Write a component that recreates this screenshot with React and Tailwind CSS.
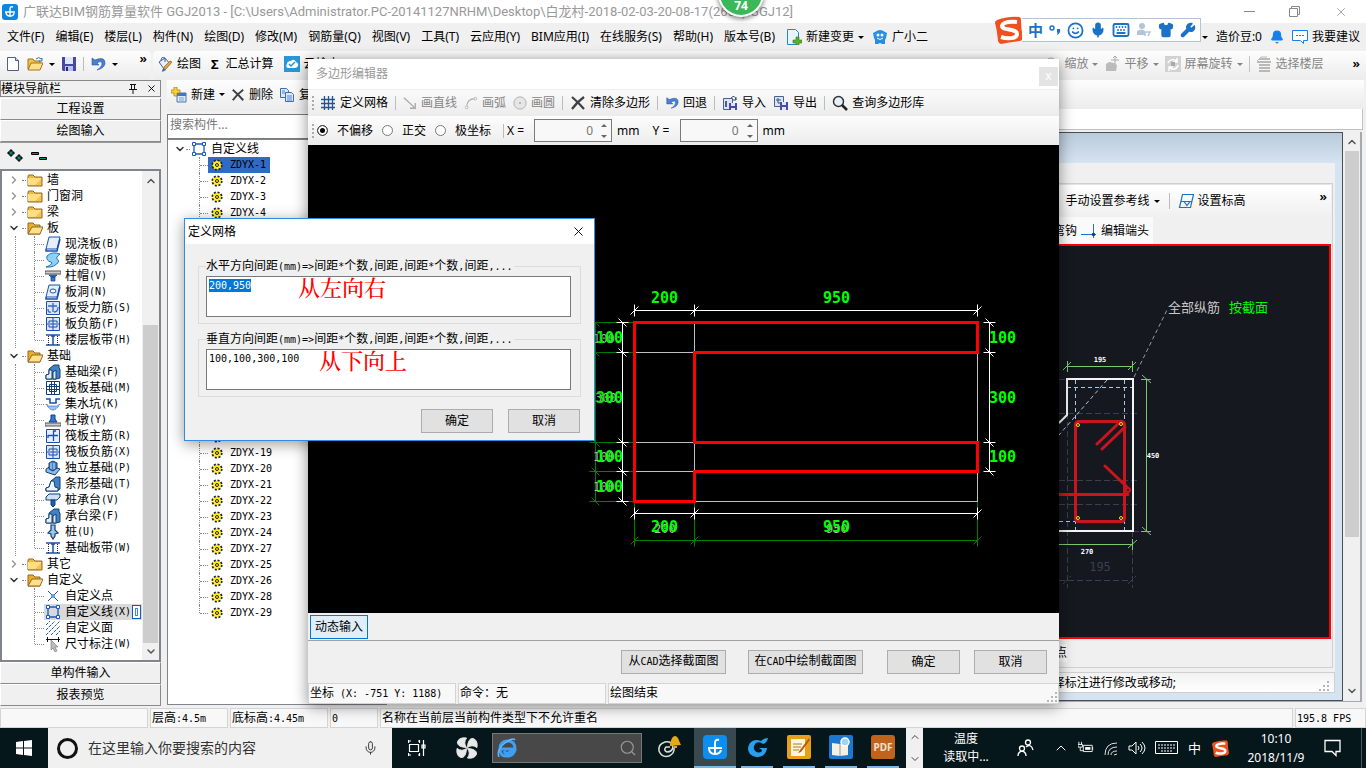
import React, { useEffect, useRef, useState } from 'react';
import { ChevronDown, ChevronRight, ChevronUp, X, Search, Bell, Mic, Smile, Keyboard, Wrench, Shirt } from 'lucide-react';

// Small 16x16 drawings, keyed by name
const ICONS = {
  page: <><path d="M2.500 1.500h8l3 3v10h-11z" fill="#fff" stroke="#4a6285" /><path d="M10.500 1.500v3h3" fill="#c9d8ec" stroke="#4a6285" /></>,
  open: <><path d="M1 13V3h5l1 2h6v8z" fill="#f3c44a" stroke="#a27420" /><path d="M1 14l3-7h12l-3 7z" fill="#ffe08a" stroke="#a27420" /><path d="M9 3q3-3 5 0l1-1v3h-3" fill="none" stroke="#3b6fb5" /></>,
  save: <><path d="M1 1h14v14H2l-1-1z" fill="#4747a8" /><path d="M4 1h8v7H4z" fill="#dfe5fa" /><path d="M4 10h8v5H4z" fill="#b9c2e6" /><path d="M5 11h2v4H5z" fill="#222a6a" /></>,
  undo: <path d="M2 2v7h7L7 7q5-3 5 1 0 3-5 6 8-2 8-7 0-7-10-3z" fill="#4c7fd0" stroke="#2a56a3" strokeWidth=".6" />,
  bucket: <><path d="M2 6l6-4 5 6-6 5z" fill="#e8eefa" stroke="#42618f" /><path d="M4 5q0-5 4-3v4" fill="none" stroke="#42618f" /><path d="M15 6l-6 7-3 2 1-4 6-6z" fill="#e9a53c" stroke="#8a5a17" strokeWidth=".7" /><path d="M6 12l3 2-4 2z" fill="#2a6cc4" /></>,
  cloud: <><rect width="16" height="16" fill="#2a95d8" /><path d="M4 12q-3-1-1-4 0-3 4-3 3-3 5 1 3 1 2 4-1 2-3 2z" fill="#fff" /><path d="M5 8l2 2 4-4" fill="none" stroke="#2a95d8" strokeWidth="1.500" /></>,
  addnew: <><path d="M6 6h9v9H6z" fill="#dce8fa" stroke="#4a76b8" /><path d="M6 6h9v3H6z" fill="#4a76b8" /><path d="M8 11h5M8 13h5" stroke="#7fa2d5" /><path d="M3 0h3v3h3v3H6v3H3V6H0V3h3z" fill="#f6d33a" stroke="#a5780f" strokeWidth=".7" /></>,
  del: <path d="M2 2q6 5 12 12M14 2Q7 7 2 14" stroke="#3d4045" strokeWidth="2.200" fill="none" />,
  copy: <><path d="M1.500 1.500h6l2 2v7h-8z" fill="#dbe8fa" stroke="#3f6db0" /><path d="M6.500 5.500h6l2 2v7h-8z" fill="#dbe8fa" stroke="#3f6db0" /><path d="M8 9h5M8 11h5M8 13h5M3 4h3M3 6h3" stroke="#5b86c4" /></>,
  change: <><path d="M1.500.5h8l3 3v12h-11z" fill="#e8f4ff" stroke="#2a85c5" /><path d="M10 8h3v3h3v3h-3v2h-3v-2H7v-3h3z" fill="#5fae2c" stroke="#2f7d10" strokeWidth=".6" /></>,
  mascot: <><path d="M3 3q5-4 10 0l2 1-1 5-1 2v4h-3l-2-1-2 1H3v-4L2 9 1 4z" fill="#2a8ee0" /><circle cx="6" cy="6" r="1.500" fill="#fff" /><circle cx="10" cy="6" r="1.500" fill="#fff" /><path d="M5 9q3 3 6 0" stroke="#fff" fill="none" /></>,
  grid: <path d="M1 4.500h14M1 8.500h14M1 12.500h14M4.500 1v14M8.500 1v14M12.500 1v14" stroke="#24509c" strokeWidth="1.300" fill="none" />,
  line: <path d="M1 2l12 11M14 8v6H8" stroke="#aaa" strokeWidth="1.500" fill="none" />,
  arc: <><path d="M3 13Q3 3 13 3" stroke="#aaa" fill="none" strokeWidth="1.300" /><circle cx="3" cy="13" r="1.500" fill="#fff" stroke="#aaa" /><circle cx="13" cy="3" r="1.500" fill="#fff" stroke="#aaa" /></>,
  circle: <><circle cx="8" cy="8" r="7" stroke="#aaa" fill="#e6e6e6" /><circle cx="8" cy="8" r="1" fill="#999" /></>,
  import: <><path d="M1.500 3.500h9v11h-9z" fill="#dbe4f5" stroke="#46618f" /><path d="M3 6h2v6H3z" fill="#46618f" /><path d="M7 8h8v7H7z" fill="#4a4aa8" /><path d="M9 8h4v3H9zM9 13h4v2H9z" fill="#dfe5fa" /><path d="M9 3q4-4 5 2M14 2v3h-3" stroke="#33507f" fill="none" /></>,
  export: <><path d="M1.500 1.500h9v10h-9z" fill="#dbe4f5" stroke="#46618f" /><path d="M3 5h5M5 3v5h4" stroke="#33507f" fill="none" /><path d="M7 7h8v8H7z" fill="#4a4aa8" /><path d="M9 7h4v3H9zM9 12h4v3H9z" fill="#dfe5fa" /></>,
  find: <><circle cx="6.500" cy="6.500" r="5" fill="#e3f1fb" stroke="#333" strokeWidth="1.500" /><path d="M10 10l5 5" stroke="#222" strokeWidth="2.500" /></>,
  hand: <><path d="M2 15V8l3-2 5 1 3 2-1 6z" fill="#bbb" /><path d="M11 0v8M7 4h8M11 0L9 2M11 0l2 2" stroke="#aaa" fill="none" /></>,
  rotate: <><rect width="16" height="16" fill="#d2d2d2" /><path d="M3 7a5 5 0 0 1 9-1M12 2v4H8M13 9a5 5 0 0 1-9 2M4 15v-4h4" stroke="#fff" strokeWidth="1.500" fill="none" /><path d="M6 6h4v4H6z" fill="#aaa" /></>,
  floors: <><path d="M3 3h11M1 6h14M3 9h11M3 12h11M3 15h11" stroke="#a5a5a5" strokeWidth="1.500" /><path d="M1 5l4-4h6" stroke="#bbb" fill="none" /></>,
  zoom: <circle cx="7" cy="7" r="5" fill="none" stroke="#aaa" />,
  level: <path d="M4.500 1.500h11l-3 13h-11zM3 8.500h11M6 8.500l3 4 3-4z" fill="none" stroke="#1974c4" strokeWidth="1.200" />,
  tip: <><path d="M0 11.500h15M12.500 1v14" stroke="#2a6cd0" /><circle cx="12.500" cy="11.500" r="1.800" fill="#123f95" /></>,
  // tree
  folder: <><path d="M1 14V4q0-1 1-1h4l2 2h7v9z" fill="#f0b93c" stroke="#8c6a25" /><path d="M1 13V6h13v7z" fill="#ffdf86" /><path d="M8 13l6-6v6z" fill="#f3c250" /></>,
  folderOpen: <><path d="M1 14V3h5l2 2h5v9z" fill="#e9ab2e" stroke="#8c6a25" /><path d="M1 14l4-7h11l-3 7z" fill="#ffe08a" stroke="#8c6a25" /></>,
  slab: <><path d="M4 1h11l-3 12H1z" fill="#e6efff" stroke="#1b4fae" /><path d="M1 13v2h11l3-12" fill="none" stroke="#1b4fae" strokeWidth="1.500" /></>,
  spiral: <path d="M2 4q5-5 13-2Q9 6 14 9q-4 7-13 6 8-3 5-5-5-1-4-6z" fill="#8fd0f5" stroke="#1f74b8" />,
  cap: <><path d="M0 3h16v3H0z" fill="#ccc" stroke="#555" /><path d="M4 7h8l-2 2H6zM6 9h4v4H6z" fill="#3a78cc" stroke="#123f85" strokeWidth=".7" /></>,
  hole: <><path d="M4 1h11l-3 12H1z" fill="#e6efff" stroke="#1b4fae" /><path d="M1 13v2h11l3-12" fill="none" stroke="#1b4fae" strokeWidth="1.500" /><ellipse cx="8" cy="7" rx="3" ry="2" fill="#fff" stroke="#1b4fae" /></>,
  rebar: <><path d="M1.500 1.500h13v13h-13z" fill="#dbe6fb" stroke="#1b4fae" /><path d="M3 6h9M8 3v9M3 9q0 4 3 3M13 7q0 5-4 5" stroke="#3568bd" strokeWidth="1.300" fill="none" /></>,
  negbar: <><path d="M1.500 1.500h13v13h-13z" fill="#dbe6fb" stroke="#1b4fae" /><path d="M8 2v12M2 8h12M4 5h8M4 11h8M4 5v2M12 5v2M4 11V9M12 11V9" stroke="#1b4fae" fill="none" /></>,
  strip: <><path d="M1 3h14M1 13h14" stroke="#1b4fae" strokeWidth="1.500" /><path d="M8 4v9M6 4h4" stroke="#1b4fae" strokeWidth="1.500" /><path d="M3.500 4v9M12.500 4v9" stroke="#222" strokeDasharray="1 1" /></>,
  beam: <><path d="M1 15v-4l3-1V5l5-4h5v3l1 1v9l-4 1z" fill="#3f83c4" stroke="#123f75" /><path d="M1 15v-4l3-1V6h3v9zM8 8l3-2v9H8z" fill="#e3eefc" stroke="#123f75" /></>,
  raft: <><path d="M1.500 1.500h13v13h-13z" fill="#fff" stroke="#123f75" /><path d="M4.500 4.500h7v7h-7zM6.500 1v14M9.500 1v14M1 6.500h14M1 9.500h14" fill="none" stroke="#123f75" /></>,
  pit: <><path d="M1 3h4v4h6V3h4" fill="none" stroke="#1b4fae" strokeWidth="1.500" /><path d="M1 8q7 12 14 0l-3 2H4z" fill="#9cc6ec" stroke="#1b4fae" strokeDasharray="1 1" /></>,
  pier: <><path d="M0 11h16v3H0z" fill="#ccc" stroke="#555" /><path d="M6 3h4v4l2 3H4l2-3z" fill="#3a78cc" stroke="#123f85" /></>,
  mainbar: <><path d="M1.500 1.500h13v13h-13z" fill="#e6efff" stroke="#1b4fae" /><path d="M8.500 3v10M3 7.500h10M3 7v3M8 3h3" stroke="#1b4fae" strokeWidth="1.300" fill="none" /></>,
  isolated: <><path d="M1 9l5-3 9 3-5 6-9-3z" fill="#8fb9e6" stroke="#123f75" /><path d="M4 9V3l4-2 4 2v5l-4 3z" fill="#3f83c4" stroke="#123f75" /><path d="M6 3v6M9 3v6" stroke="#cfe1f7" /></>,
  stripbase: <><path d="M1 15v-3l3-1 2-6 5-4h4v12l-3 2z" fill="#3f83c4" stroke="#123f75" /><path d="M1 15v-3l3-1 2-6h3l1 6 3 1v3z" fill="#eef5ff" stroke="#123f75" /></>,
  pilecap: <><path d="M1 5l3-3h11v3l-3 3H1z" fill="#cfe1f7" stroke="#123f75" /><path d="M6 8h4v5l-2 2-2-2z" fill="#1f5fa8" stroke="#123f75" /></>,
  pile: <path d="M6 1h4v5l3 3-3 1v2l-2 3-2-3v-2L3 9l3-3z" fill="#9cc6ec" stroke="#123f75" strokeWidth="1.200" />,
  point: <><path d="M3 3l10 10M13 3L3 13" stroke="#1b4fae" /><circle cx="8" cy="8" r="2" fill="#58a0e8" /></>,
  poly: <><path d="M3 3h10v10H3z" fill="none" stroke="#1b57c0" strokeWidth="1.300" /><path d="M1.500 1.500h3v3h-3zM11.500 1.500h3v3h-3zM1.500 11.500h3v3h-3zM11.500 11.500h3v3h-3z" fill="#fff" stroke="#1b57c0" /></>,
  hatch: <path d="M1 5l4-4M1 10l9-9M1 15L15 1M6 15l9-9M11 15l4-4" stroke="#2457b5" strokeDasharray="3 1" />,
  dim: <><path d="M1 3.500h14M2.500 1v5M13.500 1v5" stroke="#111" fill="none" /><path d="M6 4v10l2-2 2 4 2-1-2-4h3z" fill="#bbb" stroke="#777" strokeWidth=".6" /></>,
  gear: <><circle cx="8" cy="8" r="4.600" fill="#ffef28" stroke="#222" strokeWidth="2" strokeDasharray="2 1.600" /><circle cx="8" cy="8" r="3.800" fill="#ffef28" /><circle cx="8" cy="8" r="1.500" fill="none" stroke="#222" /></>,
};

const Icon = ({ name, className = 'w-4 h-4' }) => (
  <svg viewBox="0 0 16 16" className={`shrink-0 ${className}`} aria-hidden="true">{ICONS[name]}</svg>
);

// Latin runs are set in a half-width mono face, like the bitmap system font
const Sim = ({ children }) =>
  children.split(/([\x20-\x7e]+)/).filter(Boolean).map((part, i) =>
    /^[\x20-\x7e]/.test(part)
      ? <span key={i} className="font-['DejaVu_Sans_Mono',monospace] text-[10px] whitespace-pre">{part}</span>
      : part
  );

const Caret = ({ className = '' }) => (
  <span className={`inline-block border-x-[3px] border-t-[3px] border-x-transparent border-t-current ${className}`} />
);

const Sep = () => <span className="w-px h-[14px] bg-[#bdbdbd] shrink-0" />;

const Tool = ({ icon, label, caret, disabled, iconClass }) => (
  <button className={`flex items-center gap-1 shrink-0 whitespace-nowrap ${disabled ? 'text-[#858585]' : 'text-black'}`}>
    {icon && <Icon name={icon} className={iconClass} />}
    {label}
    {caret && <Caret />}
  </button>
);

const MENUS = ['文件(F)', '编辑(E)', '楼层(L)', '构件(N)', '绘图(D)', '修改(M)', '钢筋量(Q)', '视图(V)', '工具(T)', '云应用(Y)', 'BIM应用(I)', '在线服务(S)', '帮助(H)', '版本号(B)'];

const NAV = [
  { label: '墙' },
  { label: '门窗洞' },
  { label: '梁' },
  {
    label: '板',
    items: [['slab', '现浇板(B)'], ['spiral', '螺旋板(B)'], ['cap', '柱帽(V)'], ['hole', '板洞(N)'], ['rebar', '板受力筋(S)'], ['negbar', '板负筋(F)'], ['strip', '楼层板带(H)']],
  },
  {
    label: '基础',
    items: [['beam', '基础梁(F)'], ['raft', '筏板基础(M)'], ['pit', '集水坑(K)'], ['pier', '柱墩(Y)'], ['mainbar', '筏板主筋(R)'], ['negbar', '筏板负筋(X)'], ['isolated', '独立基础(P)'], ['stripbase', '条形基础(T)'], ['pilecap', '桩承台(V)'], ['beam', '承台梁(F)'], ['pile', '桩(U)'], ['strip', '基础板带(W)']],
  },
  { label: '其它' },
  {
    label: '自定义',
    last: true,
    items: [['point', '自定义点'], ['poly', '自定义线(X)'], ['hatch', '自定义面'], ['dim', '尺寸标注(W)']],
  },
];

const COMPONENT_IDS = [1, 2, 3, 4, 5, 6, 7, 8, 9, 10, 11, 12, 13, 14, 15, 16, 17, 18, 19, 20, 21, 22, 23, 24, 27, 25, 26, 28, 29];

const TitleBar = () => (
  <header className="flex items-center h-[23px] bg-white pl-[2px] text-[#999] text-[12px]">
    <svg viewBox="0 0 16 16" className="w-4 h-4 mr-[5px] shrink-0">
      <rect width="16" height="16" rx="3" fill="#0c86e0" />
      <path d="M3 8h10M8 13V5q0-3 3-2M4 8q0 4 4 4 4 0 4-3" stroke="#fff" strokeWidth="1.400" fill="none" />
    </svg>
    <h1 className="flex-1 whitespace-nowrap overflow-hidden font-['Roboto','Noto_Sans_CJK_SC',sans-serif] text-[13px] leading-[22px]">
      广联达BIM钢筋算量软件 GGJ2013 - [C:\Users\Administrator.PC-20141127NRHM\Desktop\白龙村-2018-02-03-20-08-17(2666).GGJ12]
    </h1>
    <div className="flex items-center gap-[34px] pr-[18px]">
      <button aria-label="最小化" className="w-[11px] h-px bg-[#888]" />
      <button aria-label="还原" className="w-[11px] h-[11px]">
        <svg viewBox="0 0 11 11" className="w-[11px] h-[11px]"><path d="M.5 2.500h8v8h-8zM2.500 2.500v-2h8v8h-2" fill="none" stroke="#888" /></svg>
      </button>
      <button aria-label="关闭"><X className="w-[14px] h-[14px]" strokeWidth={1.5} /></button>
    </div>
  </header>
);

const MenuBar = () => (
  <nav className="flex items-center h-7 bg-[#f0f0f0] pl-[7px] pr-[6px] gap-[11px] whitespace-nowrap">
    {MENUS.map((m) => <button key={m} className="shrink-0">{m}</button>)}
    <div className="flex items-center gap-2">
      <Tool icon="change" label="新建变更" caret />
      <Tool icon="mascot" label="广小二" />
    </div>
    <div className="ml-auto flex items-center gap-2">
      <Caret />
      <button>造价豆:0</button>
      <Bell className="w-[14px] h-[14px] text-[#1580ea]" fill="currentColor" />
      <button className="flex items-center gap-1">
        <svg viewBox="0 0 16 16" className="w-4 h-4"><path d="M.5 1.500h15v10h-4v3l-3-3h-8z" fill="#fff" stroke="#1580ea" /><path d="M4 6.500h8" stroke="#1580ea" strokeDasharray="2 1" /></svg>
        我要建议
      </button>
    </div>
  </nav>
);

const MainToolbar = () => (
  <div className="flex h-[29px] bg-[#f0f0f0] gap-[2px]">
    <div className="flex items-start justify-between w-[151px] shrink-0 pl-[5px] pr-1 rounded-r bg-linear-to-b from-[#fdfdfd] to-[#ececec]">
      <div className="flex items-center gap-[6px] h-[26px]">
        <Icon name="page" />
        <Icon name="open" />
        <Caret />
        <Icon name="save" />
        <Sep />
        <Icon name="undo" />
        <Caret />
      </div>
      <span className="text-[13px] leading-[14px] font-semibold">»</span>
    </div>
    <div className="flex flex-1 items-center gap-[10px] pl-1 pr-[6px] pb-[3px] rounded-l bg-linear-to-b from-[#fdfdfd] to-[#ececec]">
      <Tool icon="bucket" label="绘图" />
      <button className="flex items-center gap-[7px]"><b className="text-[13px]">Σ</b>汇总计算</button>
      <Tool icon="cloud" label="云检查" />
      <div className="ml-auto flex items-center gap-[6px] text-[#858585]">
        <Tool icon="zoom" label="缩放" caret disabled />
        <Tool icon="hand" label="平移" caret disabled />
        <Tool icon="rotate" label="屏幕旋转" caret disabled />
        <span className="w-px h-4 bg-[#c4c4c4]" />
        <Tool icon="floors" label="选择楼层" disabled />
        <span className="text-[13px] leading-[14px] font-semibold text-black self-start ml-[23px]">»</span>
      </div>
    </div>
  </div>
);

const Dots = () => <span className="w-[9px] border-t border-dotted border-[#888] shrink-0" />;

const NavTree = () => (
  <ul className="flex-1 pt-px overflow-hidden">
    {NAV.map((group) => (
      <li key={group.label}>
        <div className="flex items-center h-4 pl-[6px]">
          {group.items
            ? <ChevronDown className="w-3 h-3 text-[#333]" strokeWidth={3} />
            : <ChevronRight className="w-3 h-3 text-[#999]" strokeWidth={3} />}
          <span className="w-1 ml-[2px] mr-px border-t border-dotted border-[#888]" />
          <Icon name={group.items ? 'folderOpen' : 'folder'} className="w-4 h-4 mr-1" />
          {group.label}
        </div>
        {group.items && (
          <ul className={`ml-[13px] border-l border-dotted ${group.last ? 'border-transparent' : 'border-[#888]'}`}>
            {group.items.map(([icon, label], i) => (
              <li key={label} className="flex items-center h-4 pl-[18px]">
                <span className={`border-l border-dotted border-[#888] ${i === group.items.length - 1 ? 'h-2 self-start' : 'h-4'}`} />
                <Dots />
                <span className={`flex items-center h-4 flex-1 whitespace-nowrap ${label === '自定义线(X)' ? 'bg-[#d9d9d9]' : ''}`}>
                  <Icon name={icon} className="w-4 h-4 ml-px mr-1" />
                  <Sim>{label}</Sim>
                  {label === '自定义线(X)' && (
                    <span className="ml-px w-[9px] h-[14px] border border-[#1b57c0] bg-white p-[2px]"><i className="block h-full border border-[#3a8be0]" /></span>
                  )}
                </span>
              </li>
            ))}
          </ul>
        )}
      </li>
    ))}
  </ul>
);

const navButton = 'h-[22px] w-full bg-[#f0f0f0] border border-white border-r-[#8a8a8a] border-b-[#8a8a8a] text-center leading-5';

const NavPanel = () => (
  <aside className="flex flex-col w-[161px] shrink-0 bg-[#f0f0f0] pb-px">
    <div className="flex items-center h-[17px] mb-px border border-[#888] pr-[3px]">
      <span className="flex-1 leading-[14px]">模块导航栏</span>
      <svg viewBox="0 0 10 10" className="w-[10px] h-[10px] mr-2"><path d="M2 .5h6M3.500 0v5M6.500 0v5M1 5.500h8M5 5v5" stroke="#111" fill="none" /></svg>
      <X className="w-[11px] h-[11px]" strokeWidth={2} />
    </div>
    <button className={navButton}>工程设置</button>
    <button className={navButton}>绘图输入</button>
    <div className="flex items-center h-[27px] pl-[7px] gap-2 border-t border-[#999]">
      <svg viewBox="0 0 16 14" className="w-4 h-[14px]"><path d="M3 1h2v2h2v2H5v2H3V5H1V3h2zM11 6h2v2h2v2h-2v2h-2v-2H9V8h2z" fill="#0b8478" stroke="#000" /></svg>
      <svg viewBox="0 0 16 12" className="w-4 h-3"><path d="M.5 2.500h7v2h-7zM8.500 7.500h7v2h-7z" fill="#0b8478" stroke="#000" /></svg>
    </div>
    <div className="flex flex-1 border-2 border-[#80858b] bg-white">
      <NavTree />
      <div className="flex flex-col items-center w-[17px] bg-[#f0f0f0]">
        <ChevronUp className="w-3 h-5" strokeWidth={3} color="#555" />
        <span className="w-[15px] mt-[134px] flex-1 bg-[#cdcdcd]" />
        <ChevronDown className="w-3 h-[17px]" strokeWidth={3} color="#555" />
      </div>
    </div>
    <button className={navButton}>单构件输入</button>
    <button className={navButton}>报表预览</button>
  </aside>
);

const ComponentPanel = () => (
  <section className="flex flex-col w-[220px] shrink-0 ml-[6px] pb-[2px]">
    <div className="flex items-center h-[31px] gap-[6px] pl-1 pb-[2px] bg-linear-to-b from-[#fdfdfd] to-[#ececec]">
      <Tool icon="addnew" label="新建" caret />
      <Tool icon="del" label="删除" iconClass="w-[14px] h-[14px]" />
      <Tool icon="copy" label="复制" />
    </div>
    <input
      aria-label="搜索构件"
      placeholder="搜索构件..."
      className="h-[25px] mt-[3px] border border-[#7a7a7a] bg-white px-[2px] pb-1 placeholder:text-[#777] outline-none"
    />
    <ul className="flex-1 border border-[#80858b] bg-white pt-px">
      <li>
        <div className="flex items-center h-4 pl-[6px]">
          <ChevronDown className="w-3 h-3 text-[#333]" strokeWidth={3} />
          <span className="w-1 mr-px border-t border-dotted border-[#888]" />
          <Icon name="poly" className="w-4 h-4 mr-1" />
          自定义线
        </div>
        <ul>
          {COMPONENT_IDS.map((id, i) => (
            <li key={id} className="flex items-center h-4 pl-[31px]">
              <span className={`border-l border-dotted border-[#888] ${i === COMPONENT_IDS.length - 1 ? 'h-2 self-start' : 'h-4'}`} />
              <span className="w-2 border-t border-dotted border-[#888]" />
              <span className={`flex items-center h-4 pl-[1px] pr-1 ${id === 1 ? 'bg-[#316ac5]' : ''}`}>
                <Icon name="gear" className="w-4 h-4 mr-[5px]" />
                <Sim>{`ZDYX-${id}`}</Sim>
              </span>
            </li>
          ))}
        </ul>
      </li>
    </ul>
  </section>
);

const SectionDrawing = () => (
  <svg viewBox="1059 246 270 391" className="block w-[270px] h-[391px] font-['DejaVu_Sans_Mono',monospace]" fill="none">
    <g stroke="#39414c" strokeDasharray="6 3">
      <path d="M1067.500 413v175M1132.500 531v57M1059 413.500h79M1059 480.500h79M1059 504.500h79M1059 580.500h74M1063 584l8-8M1128 584l8-8M1059 379.500h8M1133 531.500h6" />
    </g>
    <g stroke="#a8c8ea" strokeDasharray="4 3">
      <path d="M1075.500 380v151M1124.500 380v151M1067 387.500h66M1059 521.500h16M1107 380l-48 55M1125 494.500h8" />
    </g>
    <path d="M1059 423l8-8v-36h66v152h-74" stroke="#f4f4f4" strokeWidth="2" />
    <g stroke="#7bc96f">
      <path d="M1067 366.500h66M1067.500 361v11M1132.500 361v11M1063 370l8-8M1128 370l8-8M1146.500 379v152M1141 379.500h10M1141 531.500h10M1142 375l9 8M1142 527l9 8M1059 544.500h74M1132.500 539v11M1128 548l9-8" />
    </g>
    <g stroke="#c9151e" strokeWidth="3" strokeLinecap="round">
      <rect x="1075.500" y="421.500" width="49" height="100" rx="3" />
      <path d="M1097 444l24-23M1102 449l23-22M1105 466l22 21M1059 494.500h69" />
      <circle cx="1128" cy="490" r="2" strokeWidth="2" />
    </g>
    <g stroke="#f2e31a">
      <circle cx="1078" cy="425" r="1.500" /><circle cx="1121" cy="424" r="1.500" /><circle cx="1078" cy="518" r="1.500" /><circle cx="1121" cy="518" r="1.500" />
    </g>
    <path d="M1134 377l34-69" stroke="#999" strokeDasharray="4 3" />
    <g fill="#fff" fontSize="7" fontWeight="bold" textAnchor="middle">
      <text x="1100" y="362">195</text><text x="1153" y="458">450</text><text x="1087" y="554">270</text>
    </g>
    <text x="1100" y="571" fontSize="12" fill="#39414c" textAnchor="middle">195</text>
    <g fontSize="13" className="font-['Noto_Sans_CJK_SC',sans-serif]">
      <text x="1168" y="312" fill="#c8c8c8">全部纵筋</text>
      <text x="1229" y="312" fill="#00ff00">按截面</text>
    </g>
  </svg>
);

const SectionPanel = () => (
  <main className="flex flex-col flex-1 min-w-0 bg-[#f0f0f0]">
    <div className="h-[29px] bg-linear-to-b from-[#fdfdfd] to-[#ececec] mr-[2px]" />
    <div className="h-[21px] bg-white border-b border-r border-[#c0c0c0] mr-[3px]" />
    <div className="flex flex-1 mt-[2px] mr-1 mb-[5px] border-r-2 border-b border-[#a5a9b0] bg-white">
      <div className="flex flex-col flex-1 border-t border-r border-b border-[#4a4f55] bg-[#d6e3f1] pr-[7px] pb-[7px]">
        <div className="h-[30px] -mr-[7px] bg-linear-to-b from-[#b9cbdb] to-[#d6e3f1]" />
        <div className="flex flex-col flex-1 bg-[#f0f0f0] pt-5 pr-[2px]">
          <div className="flex flex-col flex-1 border-t border-r border-b border-[#d0d0d0] pr-px">
            <div className="flex justify-end items-center h-[33px] bg-linear-to-b from-white to-[#f0f0f0] gap-2 pr-1 border-t border-[#e4e4e4]">
              <Tool label="手动设置参考线" caret />
              <span className="w-px h-4 bg-[#bbb] ml-px" />
              <Tool icon="level" label="设置标高" />
              <span className="text-[13px] font-semibold leading-[14px] self-start mt-1 ml-[66px]">»</span>
            </div>
            <div className="flex justify-end h-[27px] pr-[178px]">
              <div className="flex items-center gap-1 bg-[#fafafa] pr-1">
                <Tool label="端部弯钩" />
                <Tool icon="tip" label="编辑端头" />
              </div>
            </div>
            <div className="flex justify-end border-2 border-[#ff0000] bg-[#15181f]">
              <SectionDrawing />
            </div>
            <div className="flex items-center h-7 justify-end pr-[264px]">
              <span className="bg-[#fafafa] leading-[18px]">交点</span>
            </div>
          </div>
          <div className="flex items-center justify-end h-[21px] mt-1 -mr-[2px] border border-[#cfcfcf] bg-linear-to-b from-[#f2f2f2] to-white whitespace-nowrap pr-1">
            <span className="pr-[143px]">选择标注进行修改或移动;</span>
            <Grip />
          </div>
        </div>
      </div>
      <div className="flex flex-col items-center w-[17px] pt-px bg-[#f0f0f0]">
        <ChevronUp className="w-3 h-[18px]" strokeWidth={3} color="#555" />
        <span className="w-[14px] h-[386px] bg-[#cdcdcd]" />
        <ChevronDown className="w-3 h-5 mt-auto" strokeWidth={3} color="#555" />
      </div>
    </div>
  </main>
);

function Grip() {
  return (
    <svg viewBox="0 0 11 11" className="w-[11px] h-[11px] self-end shrink-0">
      <path d="M8 0h2v2H8zM8 4h2v2H8zM4 4h2v2H4zM8 8h2v2H8zM4 8h2v2H4zM0 8h2v2H0z" fill="#b5b5b5" />
    </svg>
  );
}

const XS = [634.5, 694.5, 977.5];
const YS = [322.5, 352.5, 442.5, 471.5, 501.5];

// Dimension line with slashed ends at every stop
const DimH = ({ y, stops, color }) => (
  <path
    stroke={color}
    d={`M${stops[0]} ${y}H${stops[stops.length - 1]}` + stops.map((x) => `M${x} ${y - 6}v12M${x - 4} ${y + 4}l8 -8`).join('')}
  />
);

const DimV = ({ x, stops, color }) => (
  <path
    stroke={color}
    d={`M${x} ${stops[0]}V${stops[stops.length - 1]}` + stops.map((y) => `M${x - 6} ${y}h12M${x - 4} ${y - 4}l8 8`).join('')}
  />
);

const PolygonDrawing = () => (
  <svg viewBox="308 145 751 468" className="block w-[751px] h-[468px] font-['DejaVu_Sans_Mono',monospace]" fill="none">
    <g stroke="#008000">
      {YS.map((y) => <path key={y} d={`M596 ${y}h38`} />)}
      {XS.map((x) => <path key={x} d={`M${x} 502v38`} />)}
    </g>
    <DimV x={595.5} stops={YS} color="#008000" />
    <DimH y={540.5} stops={XS} color="#008000" />
    <path stroke="#c0c0c0" d="M694.500 322v180M977.500 322v180M634 352.500h60M634 442.500h60M634 471.500h60M694 501.500h283" />
    <DimH y={310.5} stops={XS} color="#fff" />
    <DimH y={513.5} stops={XS} color="#fff" />
    <DimV x={622.5} stops={YS} color="#fff" />
    <DimV x={989.5} stops={YS.slice(0, 4)} color="#fff" />
    <g fill="#b8b8b8" fontSize="12">
      <text x="654" y="533">200</text><text x="826" y="533">950</text>
      <text x="593" y="343">100</text><text x="595" y="402">300</text><text x="593" y="461">100</text><text x="593" y="491">100</text>
    </g>
    <g fill="#00ff00" fontSize="15" fontWeight="bold">
      <text x="651" y="303">200</text><text x="823" y="303">950</text>
      <text x="651" y="532">200</text><text x="823" y="532">950</text>
      <text x="596" y="343">100</text><text x="596" y="403">300</text><text x="596" y="462">100</text><text x="596" y="492">100</text>
      <text x="989" y="343">100</text><text x="989" y="403">300</text><text x="989" y="462">100</text>
    </g>
    <path
      stroke="#ff0000"
      strokeWidth="3"
      d="M634.500 322.500H977.500V352.500H694.500V442.500H977.500V471.500H694.500V501.500H634.500z"
    />
  </svg>
);

const Offset = ({ id, label }) => (
  <div className="flex items-center">
    <label htmlFor={id} className="w-[27px]">{label} =</label>
    <span className="flex items-center w-[78px] h-[23px] border border-[#7a7a7a] bg-[#f8f8f8] pr-1">
      <input id={id} defaultValue="0" className="w-full text-right text-[#777] pr-2 outline-none bg-transparent" />
      <span className="flex flex-col gap-[8px] text-[#666]">
        <Caret className="rotate-180" />
        <Caret />
      </span>
    </span>
    <span className="ml-[5px]">mm</span>
  </div>
);

const pushButton = 'h-6 bg-[#e1e1e1] border border-[#adadad] whitespace-nowrap leading-[20px]';

const PolygonEditor = () => {
  const [mode, setMode] = useState('不偏移');
  return (
    <section className="absolute top-[59px] left-[308px] right-[307px] bg-[#f0f0f0] shadow-[0_2px_14px_rgba(0,0,0,0.45)]">
      <div className="flex items-center justify-between h-[30px] bg-white pl-2 pr-px text-[#999]">
        <h2>多边形编辑器</h2>
        <button className="w-[19px] h-[19px] bg-[#e4e4e4] text-white leading-[16px] mt-1">x</button>
      </div>
      <div className="flex items-center h-[27px] gap-[7px] pl-1 border-t border-[#eee] bg-linear-to-b from-[#fafafa] to-[#ececec]">
        <div className="flex items-center gap-[6px]">
          <span className="h-[14px] border-l-2 border-dotted border-[#aaa]" />
          <Tool icon="grid" label="定义网格" />
        </div>
        <Sep />
        <Tool icon="line" label="画直线" iconClass="w-[14px] h-[14px]" disabled />
        <Tool icon="arc" label="画弧" iconClass="w-[14px] h-[14px]" disabled />
        <Tool icon="circle" label="画圆" iconClass="w-[14px] h-[14px]" disabled />
        <Sep />
        <Tool icon="del" label="清除多边形" />
        <Sep />
        <Tool icon="undo" label="回退" iconClass="w-[14px] h-[14px]" />
        <Sep />
        <Tool icon="import" label="导入" />
        <Tool icon="export" label="导出" />
        <Sep />
        <Tool icon="find" label="查询多边形库" />
      </div>
      <div className="flex items-center h-[29px] pl-1 bg-linear-to-b from-[#fdfdfd] to-[#ececec]">
        <span className="h-[14px] border-l-2 border-dotted border-[#aaa] mr-[3px]" />
        <div className="flex items-center gap-[9px]">
          {['不偏移', '正交', '极坐标'].map((m) => (
            <label key={m} className="flex items-center gap-[9px]">
              <input
                type="radio"
                name="offset"
                checked={mode === m}
                onChange={() => setMode(m)}
                className="appearance-none w-[11px] h-[11px] rounded-full border border-[#777] bg-white checked:bg-black checked:border-[#444] checked:shadow-[inset_0_0_0_2px_white]"
              />
              {m}
            </label>
          ))}
        </div>
        <span className="w-px h-[14px] bg-[#bbb] ml-[12px] mr-[3px]" />
        <div className="flex gap-[13px]">
          <Offset id="offset-x" label="X" />
          <Offset id="offset-y" label="Y" />
        </div>
      </div>
      <div className="bg-black overflow-hidden">
        <PolygonDrawing />
      </div>
      <div className="flex items-center h-7 pl-[2px] border-b border-[#a0a0a0]">
        <button className="w-[58px] h-6 border border-[#0078d7] bg-[#e0eef9]">动态输入</button>
      </div>
      <div className="flex items-center justify-end h-[41px] pr-3">
        <button className={`${pushButton} w-[105px] mr-[22px]`}><Sim>从CAD选择截面图</Sim></button>
        <button className={`${pushButton} w-[115px] mr-[24px]`}><Sim>在CAD中绘制截面图</Sim></button>
        <button className={`${pushButton} w-[73px] mr-[14px]`}>确定</button>
        <button className={`${pushButton} w-[73px]`}>取消</button>
      </div>
      <div className="flex h-[22px] gap-[2px] pt-px leading-[18px] whitespace-nowrap">
        <span className="w-[148px] border border-[#d4d4d4] bg-[#f8f8f8] pl-px"><Sim>坐标 (X: -751 Y: 1188)</Sim></span>
        <span className="w-[148px] border border-[#d4d4d4] bg-[#f8f8f8] pl-px">命令：无</span>
        <span className="flex flex-1 justify-between border border-[#d4d4d4] bg-[#f8f8f8] pl-px">绘图结束<Grip /></span>
      </div>
    </section>
  );
};

const SpacingField = ({ id, label, note, noteClass, value, inputRef }) => (
  <fieldset className="relative h-[66px] border border-[#dcdcdc] pl-[7px] pr-[9px]">
    <legend className="h-4 leading-4 pr-[2px] whitespace-nowrap">
      <label htmlFor={id}><Sim>{label}</Sim></label>
    </legend>
    <textarea
      id={id}
      ref={inputRef}
      defaultValue={value}
      className="block w-full h-[41px] mt-[2px] px-[2px] py-[2px] border border-[#7a7a7a] bg-white resize-none outline-none overflow-hidden font-['DejaVu_Sans_Mono',monospace] text-[10px] leading-[13px] selection:bg-[#0078d7] selection:text-white"
    />
    <span className={`absolute -top-[2px] text-[22px] leading-[30px] font-medium text-[#ff0000] font-['Noto_Serif_CJK_SC','Noto_Sans_CJK_SC',serif] ${noteClass}`}>{note}</span>
  </fieldset>
);

const GridDialog = () => {
  const first = useRef(null);

  useEffect(() => {
    first.current.focus();
    first.current.select();
  }, []);

  return (
    <section role="dialog" aria-label="定义网格" className="absolute top-[218px] left-[184px] w-[411px] h-[223px] border border-[#2f8be6] bg-[#f0f0f0] shadow-[0_3px_14px_rgba(0,0,0,0.4)]">
      <div className="flex items-center justify-between h-[25px] bg-white pl-[3px] pr-2">
        <h2>定义网格</h2>
        <button aria-label="关闭"><X className="w-[15px] h-[15px]" strokeWidth={1.5} /></button>
      </div>
      <div className="flex flex-col gap-[7px] pt-[14px] pl-[13px] pr-[13px]">
        <SpacingField id="h-spacing" inputRef={first} label="水平方向间距(mm)=>间距*个数,间距,间距*个数,间距,..." value="200,950" note="从左向右" noteClass="left-[99px]" />
        <SpacingField id="v-spacing" label="垂直方向间距(mm)=>间距*个数,间距,间距*个数,间距,..." value="100,100,300,100" note="从下向上" noteClass="left-[120px]" />
      </div>
      <div className="flex justify-end gap-[15px] pt-3 pr-[14px]">
        <button className={`${pushButton} w-[72px]`}>确定</button>
        <button className={`${pushButton} w-[72px]`}>取消</button>
      </div>
    </section>
  );
};

const SLogo = ({ className }) => (
  <svg viewBox="0 0 28 28" className={className}>
    <path d="M2 4Q14 0 24 1q2 0 2 3 0 10 2 17 0 3-3 4-10 1-19 3-2 0-3-3Q2 14 0 7q0-2 2-3z" fill="#f0501e" />
    <path d="M22 6Q8 5 7 10c0 5 15 2 15 8 0 5-10 5-16 3" stroke="#fff" strokeWidth="4" fill="none" />
  </svg>
);

const InputMethodBar = () => (
  <div className="absolute top-4 left-[995px] flex items-center">
    <SLogo className="w-7 h-7" />
    <div className="flex items-center justify-between w-[179px] h-6 -ml-[1px] pl-[6px] pr-1 border border-l-0 border-[#b4c4d8] bg-white text-[#1b72c8]">
      <b className="text-[15px] leading-5">中</b>
      <svg viewBox="0 0 12 12" className="w-3 h-3"><circle cx="3" cy="4" r="2" fill="none" stroke="currentColor" strokeWidth="1.500" /><path d="M8 5h3q1 4-3 6 1-2 0-3z" fill="currentColor" /></svg>
      <Smile className="w-[17px] h-[17px]" strokeWidth={2.5} />
      <Mic className="w-4 h-4" fill="currentColor" strokeWidth={2.5} />
      <Keyboard className="w-[18px] h-[18px]" strokeWidth={2.5} />
      <svg viewBox="0 0 16 16" className="w-4 h-4 text-[#b4c3d6]"><circle cx="6" cy="4" r="3" fill="currentColor" /><path d="M1 13V9q5-3 8 0v4z" fill="currentColor" /><path d="M5 10h4v4M10 10h4l-2 4" stroke="currentColor" strokeWidth="1.500" fill="none" /></svg>
      <Shirt className="w-4 h-4" fill="currentColor" />
      <Wrench className="w-4 h-4" fill="currentColor" />
    </div>
  </div>
);

const StatusBar = () => (
  <footer className="flex h-[21px] gap-[2px] bg-[#f0f0f0] pt-px leading-[18px] whitespace-nowrap">
    <span className="w-[148px] border border-[#d4d4d4] bg-[#f8f8f8]" />
    <span className="w-[78px] border border-[#d4d4d4] bg-[#f8f8f8] pl-px"><Sim>层高:4.5m</Sim></span>
    <span className="w-[98px] border border-[#d4d4d4] bg-[#f8f8f8] pl-px"><Sim>底标高:4.45m</Sim></span>
    <span className="w-[48px] border border-[#d4d4d4] bg-[#f8f8f8] pl-px"><Sim>0</Sim></span>
    <span className="flex-1 border border-[#d4d4d4] bg-[#f8f8f8] pl-px">名称在当前层当前构件类型下不允许重名</span>
    <span className="w-[71px] border border-[#d4d4d4] bg-[#f8f8f8] pl-px"><Sim>195.8 FPS</Sim></span>
  </footer>
);

const APPS = [
  <><rect width="24" height="24" rx="4" fill="#0c8df0" /><path d="M5 13h14M12 19V8q0-4 4-3M6 13q0 6 6 6 5 0 6-4" stroke="#fff" strokeWidth="2" fill="none" /></>,
  <><path d="M23 3q-4 0-7 3Q9 3 5 8q-4 6 0 11 5 5 12 2 4-2 5-8h-8q3 1 3 3-3 3-7 0-3-4 1-8 4-2 7 1 4-1 5-6z" fill="#28a0f0" /></>,
  <><rect width="24" height="24" rx="2" fill="#e8a01c" /><path d="M4 4h14v17H4z" fill="#fff5dc" /><path d="M6 9h9M6 12h8M6 15h6" stroke="#b07a20" /><path d="M22 3l-9 12-2 3 3-1 9-12z" fill="#c05a10" /></>,
  <><rect width="24" height="24" rx="2" fill="#1b78d0" /><path d="M3 8l8 1 8-1v12l-8 1-8-1z" fill="#f4f0e4" /><path d="M11 9v12" stroke="#999" /><circle cx="16" cy="7" r="4" fill="#9ed4f5" stroke="#fff" strokeWidth="1.500" /></>,
  <><rect width="24" height="24" rx="3" fill="#c2631c" /><text x="12" y="16" fontSize="10" fontWeight="bold" fill="#f0e0d0" textAnchor="middle">PDF</text></>,
];

const Taskbar = () => (
  <div className="flex items-stretch h-10 bg-[#06171c] text-white">
    <button aria-label="开始" className="flex items-center justify-center w-12">
      <svg viewBox="0 0 16 16" className="w-4 h-4"><path d="M0 2l7-1v6.500H0zM8 1l8-1v7.500H8zM0 8.500h7V15l-7-1zM8 8.500h8V16l-8-1z" fill="#fff" /></svg>
    </button>
    <label className="flex items-center w-[344px] bg-[#f0f0f0] pl-[9px] pr-[14px] text-[#333]">
      <span className="w-[21px] h-[21px] rounded-full border-[3px] border-[#111] mr-[10px] shrink-0" />
      <input aria-label="搜索" defaultValue="在这里输入你要搜索的内容" className="flex-1 min-w-0 text-[14px] outline-none bg-transparent" />
      <Mic className="w-[15px] h-[18px]" strokeWidth={1.5} />
    </label>
    <div className="flex items-center gap-[30px] pl-[16px] pr-[14px]">
      <svg viewBox="0 0 18 16" className="w-[18px] h-4"><path d="M0 1h3M10 1h2M.5 0v3M11.500 0v3M1.500 4.500h9v7h-9zM.5 13v3M11.500 13v3M0 15h3M10 15h2M15.500 0v16M14 5h3v3h-3z" stroke="#fff" strokeWidth="1.200" fill="none" /></svg>
      <svg viewBox="0 0 22 22" className="w-[22px] h-[22px]" fill="#e8e8e8"><path d="M10.500 10.500Q7 6 10.500 1 3 0 1.500 5 1 10 10.500 10.500zM11.500 10.500Q16 7 21 10.500 22 3 17 1.500 12 1 11.500 10.500zM11.500 11.500Q15 16 11.500 21 19 22 20.500 17 21 12 11.500 11.500zM10.500 11.500Q6 15 1 11.500 0 19 5 20.500 10 21 10.500 11.500z" stroke="#e8e8e8" /></svg>
    </div>
    <div className="flex items-center justify-between w-[150px] my-[5px] px-1 border border-[#777] bg-[#484848]">
      <svg viewBox="0 0 20 20" className="w-5 h-5"><path d="M4 11h14q0-8-7-8-8 0-8 8t8 7q4 0 6-4h-4q-4 3-6-1" fill="none" stroke="#3ea0f5" strokeWidth="3" /><path d="M2 19Q-1 12 8 5q8-6 10-3" fill="none" stroke="#5fb4ff" strokeWidth="1.500" /></svg>
      <Search className="w-[18px] h-[18px] text-[#999]" strokeWidth={1.5} />
    </div>
    <div className="flex items-center justify-center w-[52px]">
      <svg viewBox="0 0 28 28" className="w-7 h-7"><path d="M16 13h-4q-3 3 1 5 5 0 6-5-1-6-8-5-7 2-6 9 3 7 10 5 6-3 5-8" fill="none" stroke="#ddd" strokeWidth="1.500" /><path d="M16 9l2-5q3-4 6 0l2 5 1 2-11 1zM20 12h3v2h-3z" fill="#e5a913" /></svg>
    </div>
    {APPS.map((app, i) => (
      <button key={i} aria-label={`应用 ${i + 1}`} className={`flex items-center justify-center w-[42px] ${i === 0 ? 'bg-[#384a50] shadow-[inset_0_-2px_#76b9ed]' : ''}`}>
        <span className="flex items-center justify-center h-full w-8 border-b-2 border-[#76b9ed]">
          <svg viewBox="0 0 24 24" className="w-6 h-6">{app}</svg>
        </span>
      </button>
    ))}
    <div className="flex flex-col items-center justify-between w-[17px] bg-[#f0f0f0] py-[3px] ml-[2px] text-[#444]">
      <ChevronUp className="w-3 h-3" /><ChevronDown className="w-3 h-3" />
    </div>
    <div className="ml-[20px] w-[46px] flex flex-col justify-center text-center leading-[18px] whitespace-nowrap"><span>温度</span><span>读取中...</span></div>
    <div className="flex items-center ml-auto gap-[9px] pr-[4px]">
      <svg viewBox="0 0 18 18" className="w-[18px] h-[18px] mr-[22px]"><path d="M6 7a2.500 2.500 0 1 1 0 5 2.500 2.500 0 1 1 0-5M2 17q0-4 4-5 4 1 4 5M12 1a2.500 2.500 0 1 1 0 5 2.500 2.500 0 1 1 0-5M10 8q5-4 7 3" fill="none" stroke="#fff" strokeWidth="1.300" /></svg>
      <ChevronUp className="w-4 h-4 -ml-[12px]" strokeWidth={1.5} />
      <svg viewBox="0 0 18 16" className="w-4 h-4"><path d="M4 1v3M1 1v3M0 4h5v3H0zM2.500 7v4H6" stroke="#fff" fill="none" /><path d="M6 5h10v7H6zM16.500 7v3" stroke="#fff" fill="none" /><path d="M8 7h6v3H8z" fill="#fff" /></svg>
      <svg viewBox="0 0 16 16" className="w-4 h-4"><path d="M2 15Q2 3 14 3M5 15q0-8 9-8M8 15q0-4 6-4M11 15l3-1" stroke="#ddd" fill="none" /></svg>
      <svg viewBox="0 0 18 16" className="w-[18px] h-4"><path d="M1 6h3l4-4v12l-4-4H1zM10 6q2 2 0 4M12 4q4 4 0 8M14 2q6 6 0 12" stroke="#fff" fill="none" /></svg>
      <svg viewBox="0 0 24 14" className="w-6 h-[14px]"><path d="M.5.5h22v12H.5z" stroke="#fff" fill="none" /><path d="M3 4h17M3 7h17M6 10h11" stroke="#fff" strokeDasharray="2 1" /></svg>
      <span className="text-[13px]">中</span>
      <SLogo className="w-[17px] h-[17px] mx-[2px]" />
      <div className="w-[72px] text-center leading-[19px]"><div>10:10</div><div>2018/11/9</div></div>
      <svg viewBox="0 0 18 18" className="w-[18px] h-[18px] ml-[3px]"><path d="M1 1.500h15v11h-4v4l-4-4H1z" fill="none" stroke="#fff" strokeWidth="1.300" /></svg>
      <span className="w-px h-10 bg-[#4a5a5e] ml-[10px]" />
    </div>
  </div>
);

export default function App() {
  return (
    <div className="relative flex flex-col min-h-screen overflow-hidden bg-[#f0f0f0] text-black text-[12px] leading-4 font-['Noto_Sans','Noto_Sans_CJK_SC',sans-serif]">
      <TitleBar />
      <MenuBar />
      <MainToolbar />
      <div className="flex flex-1">
        <NavPanel />
        <ComponentPanel />
        <SectionPanel />
      </div>
      <StatusBar />
      <Taskbar />

      <PolygonEditor />
      <GridDialog />
      <InputMethodBar />
      <div className="absolute -top-[29px] left-[718px] flex items-end justify-center w-[46px] h-[46px] rounded-full border-2 border-white bg-[#3bb85a] pb-px text-white font-bold shadow-[0_2px_5px_rgba(0,0,0,0.5)]">74</div>
    </div>
  );
}
